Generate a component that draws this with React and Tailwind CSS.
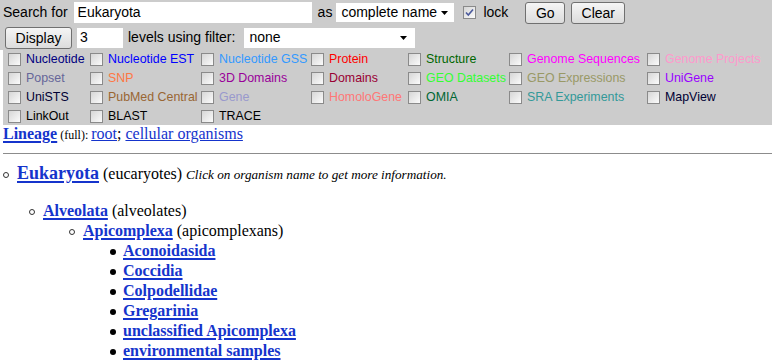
import React from 'react';

// Entrez taxonomy browser: search form + lineage tree

const sans = "font-['Liberation_Sans',Arial,sans-serif]";
const serif = "font-['Liberation_Serif','Times_New_Roman',serif]";

const databases = [
    [
        ['Nucleotide', 'text-[#000080]'],
        ['Nucleotide EST', 'text-[#0000ff]'],
        ['Nucleotide GSS', 'text-[#3399ff]'],
        ['Protein', 'text-[#ff0000]'],
        ['Structure', 'text-[#006600]'],
        ['Genome Sequences', 'text-[#ff00ff]'],
        ['Genome Projects', 'text-[#ff99cc]'],
    ],
    [
        ['Popset', 'text-[#666699]'],
        ['SNP', 'text-[#ff7744]'],
        ['3D Domains', 'text-[#990099]'],
        ['Domains', 'text-[#990033]'],
        ['GEO Datasets', 'text-[#33ff33]'],
        ['GEO Expressions', 'text-[#999966]'],
        ['UniGene', 'text-[#9900ff]'],
    ],
    [
        ['UniSTS', 'text-[#000033]'],
        ['PubMed Central', 'text-[#996633]'],
        ['Gene', 'text-[#9999cc]'],
        ['HomoloGene', 'text-[#ff7777]'],
        ['OMIA', 'text-[#006633]'],
        ['SRA Experiments', 'text-[#339999]'],
        ['MapView', 'text-[#000033]'],
    ],
    [
        ['LinkOut', 'text-black'],
        ['BLAST', 'text-black'],
        ['TRACE', 'text-black'],
    ],
];

const children = [
    'Aconoidasida',
    'Coccidia',
    'Colpodellidae',
    'Gregarinia',
    'unclassified Apicomplexa',
    'environmental samples',
];

const CheckBox = ({ checked }) => (
    <span className="relative inline-block w-[13px] h-[13px] shrink-0 border border-[#8a8a8a] bg-gradient-to-br from-[#d6d6d6] to-[#fbfbfb]">
        {checked && (
            <svg viewBox="0 0 11 11" className="absolute inset-0 w-[11px] h-[11px]">
                <path d="M2 5.5 L4.3 8 L9 2.5" fill="none" stroke="#4b5a9c" strokeWidth="1.6" />
            </svg>
        )}
    </span>
);

const Button = ({ children, className = '' }) => (
    <button className={`h-[22px] border border-[#707070] rounded-[3px] bg-gradient-to-b from-[#f5f5f5] to-[#dcdcdc] text-[14px] text-black leading-none ${className}`}>
        {children}
    </button>
);

const Select = ({ value, className = '' }) => (
    <div className={`h-[19px] bg-white flex items-center justify-between pl-[5px] pr-[6px] text-[14px] text-black ${className}`}>
        <span>{value}</span>
        <svg viewBox="0 0 7 4" className="w-[7px] h-[4px]">
            <path d="M0 0 L7 0 L3.5 4 Z" fill="#000" />
        </svg>
    </div>
);

const Circle = ({ className = '' }) => (
    <span className={`inline-block w-[6px] h-[6px] rounded-full border border-[#333] align-middle ${className}`} />
);

const Disc = () => (
    <span className="inline-block w-[6px] h-[6px] rounded-full bg-black align-middle mr-[7px]" />
);

const TaxLink = ({ children, className = '' }) => (
    <a href="#" className={`font-bold text-[#1534cc] underline decoration-2 underline-offset-[2px] ${className}`}>
        {children}
    </a>
);

export default function App() {
    return (
        <div className="w-[772px] h-[361px] overflow-hidden bg-white">
            {/* Search form */}
            <div className={`bg-[#cccccc] ${sans}`}>
                <div className="flex items-center h-[25px] pl-[3px] text-[14px] text-black">
                    <span>Search for</span>
                    <div className="ml-[6px] w-[238px] h-[21px] bg-white flex items-center pl-[4px]">Eukaryota</div>
                    <span className="ml-[6px]">as</span>
                    <Select value="complete name" className="ml-[4px] w-[118px]" />
                    <span className="ml-[9px] flex"><CheckBox checked /></span>
                    <span className="ml-[7px]">lock</span>
                    <Button className="ml-[17px] w-[40px]">Go</Button>
                    <Button className="ml-[6px] w-[54px]">Clear</Button>
                </div>
                <div className="flex items-center h-[25px] pl-[5px] text-[14px] text-black">
                    <Button className="w-[67px] h-[21px]">Display</Button>
                    <div className="ml-[5px] w-[46px] h-[20px] bg-white flex items-center pl-[3px]">3</div>
                    <span className="ml-[5px]">levels using filter:</span>
                    <Select value="none" className="ml-[9px] w-[171px] h-[20px] pr-[8px]" />
                </div>
            </div>
            <div className={`ml-[3px] bg-[#cccccc] h-[75px] pl-[5px] ${sans}`}>
                {databases.map((row, i) => (
                    <div key={i} className="grid grid-cols-[82px_111px_110px_97px_101px_138px_1fr] h-[19px] items-center">
                        {row.map(([name, color]) => (
                            <div key={name} className="flex items-center whitespace-nowrap">
                                <CheckBox />
                                <span className={`ml-[5px] text-[12.4px] leading-none ${color}`}>{name}</span>
                            </div>
                        ))}
                    </div>
                ))}
            </div>

            {/* Lineage */}
            <div className={`${serif} text-black`}>
                <div className="pl-[3px] text-[16px] leading-[18px]">
                    <TaxLink>Lineage</TaxLink>
                    <span className="text-[12px]"> (full): </span>
                    <a href="#" className="text-[#1534cc] underline">root</a>
                    <span>; </span>
                    <a href="#" className="text-[#1534cc] underline">cellular organisms</a>
                </div>
                <div className="ml-[3px] mt-[9px] border-t border-[#8c8c8c]" />

                <div className="mt-[8px] pl-[3px] text-[18px] leading-[22px] whitespace-nowrap">
                    <Circle className="mr-[8px]" />
                    <TaxLink>Eukaryota</TaxLink>
                    <span className="text-[16px]"> (eucaryotes)</span>
                    <i className="ml-[4px] text-[13.2px]">Click on organism name to get more information.</i>
                </div>

                <div className="mt-[15px] text-[16px] leading-[20px]">
                    <div className="pl-[29px]">
                        <Circle className="mr-[8px]" />
                        <TaxLink>Alveolata</TaxLink> (alveolates)
                    </div>
                    <div className="pl-[69px]">
                        <Circle className="mr-[8px]" />
                        <TaxLink>Apicomplexa</TaxLink> (apicomplexans)
                    </div>
                    {children.map(name => (
                        <div key={name} className="pl-[110px]">
                            <Disc />
                            <TaxLink>{name}</TaxLink>
                        </div>
                    ))}
                </div>
            </div>
        </div>
    );
}
